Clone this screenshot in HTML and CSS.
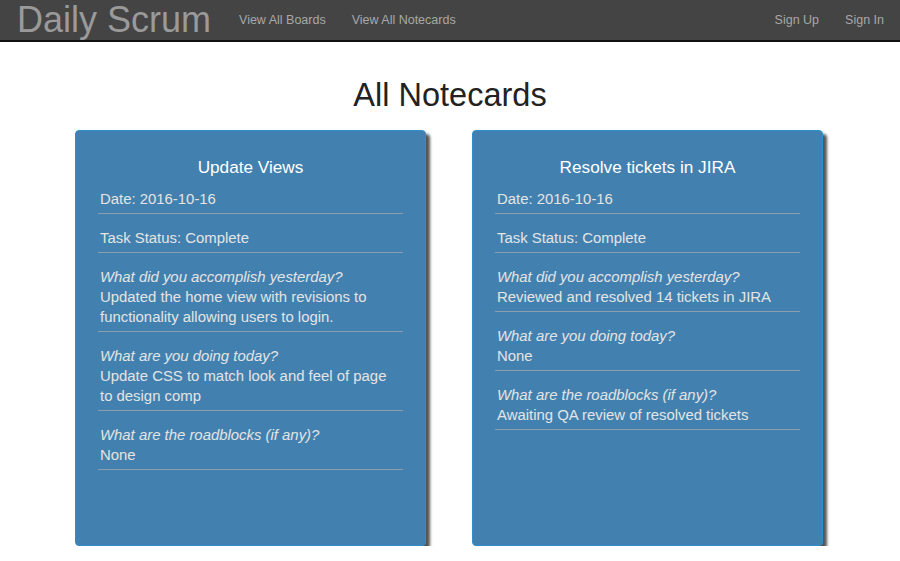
FILE: index.html
```html
<!DOCTYPE html>
<html>
<head>
<meta charset="utf-8">
<link rel="stylesheet" href="styles.css">
</head>
<body>
<nav class="navbar">
  <div class="nav-left">
    <a class="brand" href="#">Daily Scrum</a>
    <a class="nav-link" href="#">View All Boards</a>
    <a class="nav-link" href="#">View All Notecards</a>
  </div>
  <div class="nav-right">
    <a class="nav-link" href="#">Sign Up</a>
    <a class="nav-link" href="#">Sign In</a>
  </div>
</nav>
<main class="content">
  <h1 class="page-title">All Notecards</h1>
  <div class="cards">
    <section class="card">
      <h2 class="card-title">Update Views</h2>
      <ul class="card-list">
        <li>Date: 2016-10-16</li>
        <li>Task Status: Complete</li>
        <li><em>What did you accomplish yesterday?</em><br>Updated the home view with revisions to functionality allowing users to login.</li>
        <li><em>What are you doing today?</em><br>Update CSS to match look and feel of page to design comp</li>
        <li><em>What are the roadblocks (if any)?</em><br>None</li>
      </ul>
    </section>
    <section class="card">
      <h2 class="card-title">Resolve tickets in JIRA</h2>
      <ul class="card-list">
        <li>Date: 2016-10-16</li>
        <li>Task Status: Complete</li>
        <li><em>What did you accomplish yesterday?</em><br>Reviewed and resolved 14 tickets in JIRA</li>
        <li><em>What are you doing today?</em><br>None</li>
        <li><em>What are the roadblocks (if any)?</em><br>Awaiting QA review of resolved tickets</li>
      </ul>
    </section>
  </div>
</main>
</body>
</html>
```
FILE: styles.css
```css
* { box-sizing: border-box; }
html, body { margin: 0; padding: 0; background: #fff; }
body { font-family: "Liberation Sans", Arial, sans-serif; }
a { text-decoration: none; }

.navbar {
  height: 42px;
  background: #444;
  border-bottom: 2px solid #111;
  display: flex;
  justify-content: space-between;
  align-items: center;
  padding: 0 16px 0 17px;
}
.nav-left, .nav-right { display: flex; align-items: center; }
.brand {
  font-size: 36px;
  color: #9a9a9a;
  line-height: 40px;
  margin-right: 28px;
  margin-top: -1px;
}
.nav-link {
  font-size: 12.5px;
  color: #a8a8a8;
  margin-right: 26px;
}
.nav-right .nav-link { margin-right: 0; margin-left: 26px; }

.content { padding-top: 34px; }
.page-title {
  margin: 0;
  text-align: center;
  font-size: 32.5px;
  font-weight: normal;
  color: #222;
  line-height: 38px;
}
.cards {
  display: flex;
  justify-content: center;
  gap: 46px;
  margin-top: 16px;
  padding-right: 2px;
}
.card {
  width: 351px;
  height: 416px;
  background: #4281af;
  border: 1px solid #2f8fce;
  border-radius: 4px;
  box-shadow: 4px 4px 3px #555;
  padding: 25px 22px 0 22px;
}
.card-title {
  margin: 0;
  text-align: center;
  font-size: 17.2px;
  font-weight: normal;
  color: #fff;
  line-height: 22px;
}
.card-list {
  list-style: none;
  margin: 0;
  padding: 0;
}
.card-list li {
  font-size: 14.9px;
  line-height: 20px;
  color: #e4e4e4;
  padding: 14px 2px 4px 2px;
  border-bottom: 1px solid #8c9eae;
}
.card-list li:first-child { padding-top: 11px; }
.card-list em { font-style: italic; }
```
